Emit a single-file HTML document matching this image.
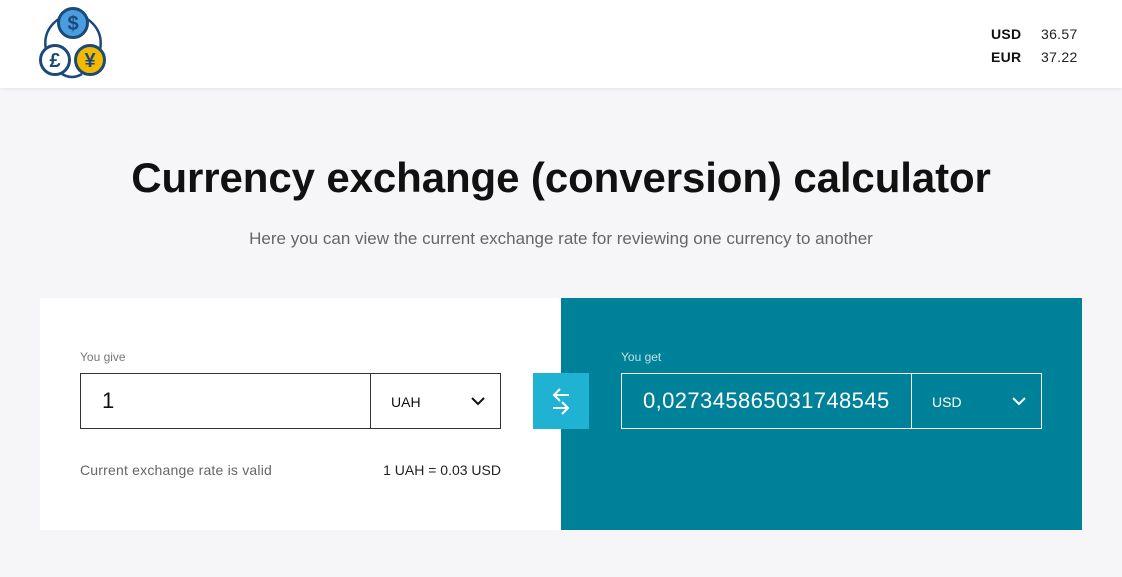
<!DOCTYPE html>
<html><head><meta charset="utf-8"><style>
*{margin:0;padding:0;box-sizing:border-box}
body{width:1122px;height:577px;background:#f6f6f8;font-family:"Liberation Sans",sans-serif;position:relative;overflow:hidden}
.hdr{position:absolute;left:0;top:0;width:1122px;height:88px;background:#fff;box-shadow:0 1px 4px rgba(0,0,0,.08)}
.rates{position:absolute;left:991px;top:23px;font-size:14px;line-height:23px;color:#222;letter-spacing:.3px}
.rates b{display:inline-block;width:50px;color:#111}
h1{position:absolute;left:0;width:1122px;top:154px;text-align:center;font-size:42px;font-weight:700;color:#111;letter-spacing:-0.1px}
.sub{position:absolute;left:0;width:1122px;top:229px;text-align:center;font-size:17px;color:#666;letter-spacing:0}
.left{position:absolute;left:40px;top:298px;width:521px;height:232px;background:#fff}
.right{position:absolute;left:561px;top:298px;width:521px;height:232px;background:#00819a}
.lbl{position:absolute;font-size:12px}
.box{position:absolute;top:373px;width:421px;height:56px;border:1px solid #333}
.box .v{position:absolute;left:21px;top:14px;font-size:22px;letter-spacing:.4px}
.box .s{position:absolute;left:289px;top:0;width:131px;height:54px;border-left:1px solid #333;font-size:14px;padding:20px 0 0 20px}
.chev{position:absolute;right:16px;top:20px;width:14px;height:14px}
.swap{position:absolute;left:533px;top:373px;width:56px;height:56px;background:#1fb2d2}
</style></head><body>
<div class="hdr">
<svg style="position:absolute;left:36px;top:4px" width="74" height="76" viewBox="36 4 74 76">
<path d="M60 18 Q42 30 46 50 M86 18 Q104 30 100 50 M62 74 Q72 80 82 74" fill="none" stroke="#1b4a7a" stroke-width="2.5"/>
<circle cx="73" cy="23" r="14.5" fill="#4a9ee0" stroke="#1b4a7a" stroke-width="3"/>
<circle cx="55" cy="60" r="14.5" fill="#fff" stroke="#1b4a7a" stroke-width="3"/>
<circle cx="90" cy="60" r="14.5" fill="#f5b800" stroke="#1b4a7a" stroke-width="3"/>
<text x="73" y="30" font-size="20" font-weight="700" fill="#1b4a7a" text-anchor="middle" font-family="Liberation Sans">$</text>
<text x="55" y="67" font-size="20" font-weight="700" fill="#1b4a7a" text-anchor="middle" font-family="Liberation Sans">£</text>
<text x="90" y="67" font-size="20" font-weight="700" fill="#1b4a7a" text-anchor="middle" font-family="Liberation Sans">¥</text>
</svg>
<div class="rates"><b>USD</b>36.57<br><b>EUR</b>37.22</div>
</div>
<h1>Currency exchange (conversion) calculator</h1>
<div class="sub">Here you can view the current exchange rate for reviewing one currency to another</div>
<div class="left"></div><div class="right"></div>
<div class="lbl" style="left:80px;top:350px;color:#777">You give</div>
<div class="lbl" style="left:621px;top:350px;color:#bfe0e6">You get</div>
<div class="box" style="left:80px;color:#111"><div class="v">1</div><div class="s">UAH<svg class="chev" viewBox="0 0 14 14"><path d="M1 4l6 6 6-6" fill="none" stroke="#111" stroke-width="2"/></svg></div></div>
<div class="swap"><svg width="56" height="56"><path d="M36 22H22M27 16l-6 6 6 6M20 35h14M29 29l6 6-6 6" fill="none" stroke="#fff" stroke-width="2"/></svg></div>
<div class="box" style="left:621px;border-color:#fff;color:#fff;overflow:hidden"><div class="v" style="white-space:nowrap;width:268px;overflow:hidden">0,027345865031748545</div><div class="s" style="border-color:#fff">USD<svg class="chev" viewBox="0 0 14 14"><path d="M1 4l6 6 6-6" fill="none" stroke="#fff" stroke-width="2"/></svg></div></div>
<div style="position:absolute;left:80px;top:462px;font-size:14px;color:#666;letter-spacing:.2px">Current exchange rate is valid</div>
<div style="position:absolute;left:360px;top:462px;width:141px;text-align:right;font-size:14px;color:#222">1 UAH = 0.03 USD</div>
</body></html>
